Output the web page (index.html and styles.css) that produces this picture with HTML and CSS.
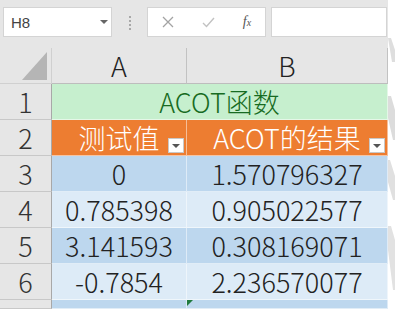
FILE: index.html
```html
<!DOCTYPE html>
<html lang="zh-CN">
<head>
    <meta charset="UTF-8">
    <title>ACOT函数</title>
    <link rel="stylesheet" href="styles.css">
</head>
<body>
    <div class="app">
        <div class="excel">
            <!-- 编辑栏 -->
            <div class="formula_bar">
                <div class="name_box">
                    <span>H8</span>
                    <i class="caret"></i>
                </div>
                <div class="grip"><i></i><i></i><i></i><i></i></div>
                <div class="fx_tools">
                    <span class="tool">
                        <svg width="12" height="12" viewBox="0 0 12 12"><path d="M1 1L11 11M11 1L1 11" stroke="#a3a3a3" stroke-width="1.3" fill="none"/></svg>
                    </span>
                    <span class="tool">
                        <svg width="13" height="11" viewBox="0 0 13 11"><path d="M1 6L4.5 9.5L12 1" stroke="#c2c2c2" stroke-width="1.4" fill="none"/></svg>
                    </span>
                    <span class="tool fx">f<sub>x</sub></span>
                </div>
                <div class="formula_input"></div>
            </div>
            <!-- 工作表 -->
            <div class="sheet">
                <div class="corner">
                    <svg width="51" height="35" viewBox="0 0 51 35"><polygon points="22,32 47,32 47,4" fill="#b5b5b5"/></svg>
                </div>
                <div class="col_head">A</div>
                <div class="col_head">B</div>

                <div class="row_head">1</div>
                <div class="cell title">ACOT函数</div>

                <div class="row_head">2</div>
                <div class="cell head">测试值<span class="filter"></span></div>
                <div class="cell head">ACOT的结果<span class="filter"></span></div>

                <div class="row_head">3</div>
                <div class="cell dark">0</div>
                <div class="cell dark">1.570796327</div>

                <div class="row_head">4</div>
                <div class="cell light">0.785398</div>
                <div class="cell light">0.905022577</div>

                <div class="row_head">5</div>
                <div class="cell dark">3.141593</div>
                <div class="cell dark">0.308169071</div>

                <div class="row_head">6</div>
                <div class="cell light">-0.7854</div>
                <div class="cell light">2.236570077</div>

                <!-- 第7行只露出顶部一截 -->
                <div class="row_head"></div>
                <div class="cell dark"></div>
                <div class="cell dark"><i class="error_mark"></i></div>
            </div>
        </div>
        <div class="edge">
            <svg width="7" height="309" viewBox="0 0 7 309">
                <polygon points="0,38 3,38 7,50 7,62 4,62" fill="#dedede"/>
                <polygon points="0,96 3,96 7,110 7,140 5,140 0,118" fill="#dcdcdc"/>
                <polygon points="0,160 2,160 7,176 7,200 5,200 0,182" fill="#e0e0e0"/>
                <polygon points="0,226 3,226 7,240 7,290 5,290 0,250" fill="#e2e2e2"/>
            </svg>
        </div>
    </div>
</body>
</html>
```

FILE: styles.css
```css
html,body {
    margin: 0;
    padding: 0;
}
body {
    width: 395px;
    height: 309px;
    overflow: hidden;
    background-color: #ffffff;
    font-family: 'Noto Sans CJK SC', 'Liberation Sans', sans-serif;
}
.app {
    display: flex;
    height: 309px;
}
.excel {
    width: 388px;
    flex: none;
}
.edge {
    flex: 1;
    background-color: #ffffff;
}
.edge svg {
    display: block;
}

/* 编辑栏 */
.formula_bar {
    display: flex;
    align-items: flex-start;
    box-sizing: border-box;
    height: 48px;
    padding-top: 7px;
    background-color: #e6e6e6;
}
.name_box {
    position: relative;
    display: flex;
    align-items: center;
    box-sizing: border-box;
    margin-left: 3px;
    width: 109px;
    height: 30px;
    padding-left: 7px;
    border: 1px solid #d4d4d4;
    background-color: #ffffff;
    font: 15px 'Liberation Sans', sans-serif;
    color: #444444;
}
.caret {
    position: absolute;
    left: 96px;
    top: 12px;
    width: 0;
    height: 0;
    border-left: 4px solid transparent;
    border-right: 4px solid transparent;
    border-top: 4px solid #666666;
}
.grip {
    display: flex;
    flex-direction: column;
    align-items: center;
    gap: 2px;
    width: 35px;
    padding-top: 9px;
}
.grip i {
    display: block;
    width: 2px;
    height: 2px;
    background-color: #a8a8a8;
}
.fx_tools {
    display: grid;
    grid-template-columns: 40px 40px 38px;
    align-items: center;
    box-sizing: border-box;
    width: 119px;
    height: 30px;
    border: 1px solid #d4d4d4;
    background-color: #ffffff;
}
.tool {
    display: flex;
    justify-content: center;
    align-items: center;
}
.fx {
    font: italic 14px 'Liberation Serif', serif;
    color: #555555;
}
.fx sub {
    font-size: 10px;
    vertical-align: -1px;
}
.formula_input {
    box-sizing: border-box;
    margin-left: 5px;
    margin-right: 1px;
    flex: 1;
    height: 30px;
    border: 1px solid #d4d4d4;
    background-color: #ffffff;
}

/* 工作表 */
.sheet {
    display: grid;
    grid-template-columns: 52px 135px 201px;
    grid-template-rows: repeat(7, 36px) 9px;
    font-size: 27px;
    font-weight: 300;
    color: #222222;
}
.sheet > div {
    display: flex;
    justify-content: center;
    align-items: center;
    box-sizing: border-box;
    border-right: 1px solid #d0d0d0;
    border-bottom: 1px solid #d0d0d0;
    white-space: nowrap;
}
.corner {
    background-color: #e6e6e6;
}
.corner svg {
    display: block;
}
.col_head {
    background-color: #e6e6e6;
    border-right-color: #c2c2c2 !important;
    border-bottom-color: #bdbdbd !important;
}
.row_head {
    background-color: #e6e6e6;
    border-right-color: #a8a8a8 !important;
    border-bottom-color: #c8c8c8 !important;
    color: #333333;
}
.cell {
    position: relative;
    border-right-color: rgba(255, 255, 255, 0.5) !important;
    border-bottom-color: rgba(255, 255, 255, 0.55) !important;
}
.title {
    grid-column: span 2;
    background-color: #c6efce;
    color: #176b22;
}
.head {
    background-color: #ed7d31;
    color: #ffffff;
}
.dark {
    background-color: #bdd7ee;
}
.light {
    background-color: #ddebf7;
}
/* 筛选按钮 */
.filter {
    position: absolute;
    right: 2px;
    bottom: 2px;
    box-sizing: border-box;
    width: 16px;
    height: 15px;
    border: 1px solid #c8c8c8;
    background-color: #ffffff;
}
.filter::after {
    content: '';
    position: absolute;
    left: 3px;
    top: 5px;
    border-left: 4px solid transparent;
    border-right: 4px solid transparent;
    border-top: 4px solid #555555;
}
.error_mark {
    position: absolute;
    left: 0;
    top: 0;
    width: 0;
    height: 0;
    border-top: 6px solid #1f7a3e;
    border-right: 6px solid transparent;
}
```
